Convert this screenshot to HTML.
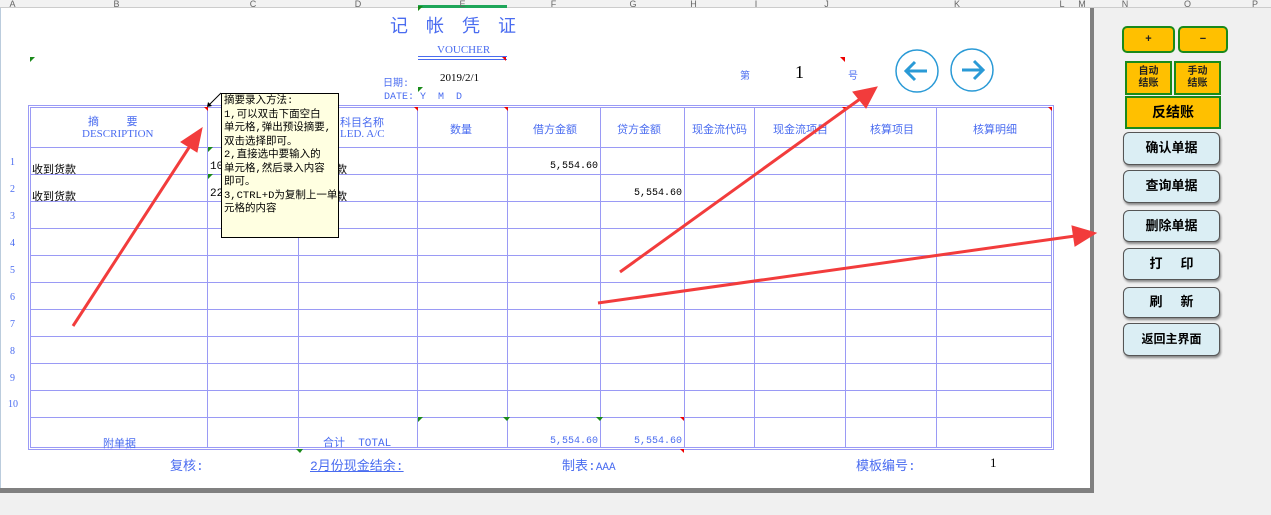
<!DOCTYPE html>
<html><head><meta charset="utf-8"><style>
*{margin:0;padding:0;box-sizing:border-box}
body{width:1271px;height:515px;background:#f0f0f0;position:relative;overflow:hidden;font-family:"Liberation Sans","Noto Sans CJK SC",sans-serif}
.a{position:absolute}
.hdr{position:absolute;top:0;height:8px;font-size:9px;color:#666;line-height:8px;text-align:center;overflow:hidden}
.t{position:absolute;font-family:"Liberation Mono","Noto Sans CJK SC",monospace;white-space:nowrap}
.n{position:absolute;font-family:"Liberation Mono",monospace;font-size:10px;white-space:nowrap;text-align:right}
.bl{color:#4a6cf0}
.btn{position:absolute;left:1123px;width:97px;background:#dbeef4;border:1.5px solid #555;border-radius:6px;box-shadow:1px 2px 2px #888;font-weight:bold;font-size:13px;text-align:center}
.yb{position:absolute;background:#ffc000;border:2px solid #1a8a1a;font-size:11px;text-align:center;font-weight:bold;color:#222}
</style></head><body>
<div class="a" style="left:0;top:0;width:1271px;height:8px;background:#f2f2f2;border-bottom:1px solid #ccc"></div>
<div class="a" style="left:418px;top:5px;width:89px;height:3px;background:#1fa65a"></div>
<div class="hdr" style="left:0;width:25px">A</div>
<div class="hdr" style="left:25px;width:183px">B</div>
<div class="hdr" style="left:208px;width:90px">C</div>
<div class="hdr" style="left:298px;width:120px">D</div>
<div class="hdr" style="left:418px;width:89px">E</div>
<div class="hdr" style="left:507px;width:93px">F</div>
<div class="hdr" style="left:600px;width:66px">G</div>
<div class="hdr" style="left:666px;width:55px">H</div>
<div class="hdr" style="left:721px;width:70px">I</div>
<div class="hdr" style="left:791px;width:71px">J</div>
<div class="hdr" style="left:862px;width:190px">K</div>
<div class="hdr" style="left:1052px;width:20px">L</div>
<div class="hdr" style="left:1072px;width:20px">M</div>
<div class="hdr" style="left:1100px;width:50px">N</div>
<div class="hdr" style="left:1160px;width:55px">O</div>
<div class="hdr" style="left:1230px;width:50px">P</div>
<div class="a" style="left:0;top:8px;width:1090px;height:481px;background:#fff;border-left:1px solid #bcd"></div>
<div class="a" style="left:1090px;top:8px;width:4px;height:485px;background:#808080"></div>
<div class="a" style="left:0;top:488px;width:1094px;height:5px;background:#808080"></div>

<div class="t bl" style="left:390px;top:12px;font-size:18px;letter-spacing:18px;font-family:'Liberation Sans','Noto Sans CJK SC',sans-serif">记帐凭证</div>
<div class="t bl" style="left:437px;top:44px;font-size:11px;font-family:'Liberation Serif',serif">VOUCHER</div>
<div class="a" style="left:418px;top:56px;width:89px;height:4px;border-top:1px solid #4a6cf0;border-bottom:1px solid #4a6cf0"></div>
<div class="t bl" style="left:383px;top:74px;font-size:10px">日期:</div>
<div class="t" style="left:440px;top:72px;font-size:11px;font-family:'Liberation Serif',serif">2019/2/1</div>
<div class="t bl" style="left:384px;top:92px;font-size:10px">DATE: Y &nbsp;M &nbsp;D</div>
<div class="t bl" style="left:740px;top:67px;font-size:10px">第</div>
<div class="t" style="left:795px;top:62px;font-size:18px;font-family:'Liberation Serif',serif">1</div>
<div class="t bl" style="left:848px;top:67px;font-size:10px">号</div>
<svg class="a" style="left:888px;top:46px" width="120" height="50">
<ellipse cx="29" cy="25" rx="21" ry="21" fill="#fff" stroke="#2a9ad6" stroke-width="1.5"/>
<ellipse cx="84" cy="24" rx="21" ry="21" fill="#fff" stroke="#2a9ad6" stroke-width="1.5"/>
<path d="M39 25H18M27 16l-9 9 9 9" fill="none" stroke="#2a9ad6" stroke-width="3"/>
<path d="M74 24h21M86 15l9 9-9 9" fill="none" stroke="#2a9ad6" stroke-width="3"/>
</svg>

<svg class="a" style="left:0;top:0" width="1090" height="490">
<g stroke="#9a9af5" stroke-width="1" fill="none">
<rect x="28.5" y="105.5" width="1025" height="344"/>
<rect x="30.5" y="107.5" width="1021" height="340"/>
<path d="M30.5 147.5H1051.5M30.5 174.5H1051.5M30.5 201.5H1051.5M30.5 228.5H1051.5M30.5 255.5H1051.5M30.5 282.5H1051.5M30.5 309.5H1051.5M30.5 336.5H1051.5M30.5 363.5H1051.5M30.5 390.5H1051.5M30.5 417.5H1051.5"/>
<path d="M207.5 107V447M298.5 107V447M417.5 107V447M507.5 107V447M600.5 107V447M684.5 107V447M754.5 107V447M845.5 107V447M936.5 107V447"/>
</g>
<g fill="#e00">
<path d="M204 107h4v4zM414 107h4v4zM504 107h4v4zM842 107h4v4zM1048 107h4v4zM502 57h4v4zM840 57h5v5zM680 417h4v4zM680 449h4v4z"/>
</g>
<g fill="#1a8a1a">
<path d="M30 57h5l-5 5zM418 6h5l-5 5zM418 87h5l-5 5zM208 147h5l-5 5zM208 174h5l-5 5zM418 417h5l-5 5zM503 417h7l-3 4zM596 417h7l-3 4zM296 449h7l-3 4z"/>
</g>
</svg>
<div class="t bl" style="left:88px;top:113px;font-size:11px;font-family:'Liberation Sans','Noto Sans CJK SC',sans-serif">摘 &nbsp; &nbsp; &nbsp; &nbsp; 要</div>
<div class="t bl" style="left:82px;top:128px;font-size:11px;font-family:'Liberation Serif',serif">DESCRIPTION</div>
<div class="t bl" style="left:340px;top:114px;font-size:11px">科目名称</div>
<div class="t bl" style="left:340px;top:128px;font-size:11px;font-family:'Liberation Serif',serif">LED. A/C</div>
<div class="t bl" style="left:450px;top:121px;font-size:11px">数量</div>
<div class="t bl" style="left:533px;top:121px;font-size:11px">借方金额</div>
<div class="t bl" style="left:617px;top:121px;font-size:11px">贷方金额</div>
<div class="t bl" style="left:692px;top:121px;font-size:11px">现金流代码</div>
<div class="t bl" style="left:773px;top:121px;font-size:11px">现金流项目</div>
<div class="t bl" style="left:870px;top:121px;font-size:11px">核算项目</div>
<div class="t bl" style="left:973px;top:121px;font-size:11px">核算明细</div>
<div class="t bl" style="left:10px;top:149px;font-size:10px;font-family:'Liberation Serif',serif;line-height:27px">1<br>2<br>3<br>4<br>5<br>6<br>7<br>8<br>9</div>
<div class="t bl" style="left:8px;top:399px;font-size:10px;font-family:'Liberation Serif',serif">10</div>
<div class="t" style="left:32px;top:161px;font-size:11px">收到货款</div>
<div class="t" style="left:32px;top:188px;font-size:11px">收到货款</div>
<div class="t" style="left:210px;top:161px;font-size:11px">10</div>
<div class="t" style="left:210px;top:188px;font-size:11px">22</div>
<div class="t" style="left:336px;top:161px;font-size:11px">款</div>
<div class="t" style="left:336px;top:188px;font-size:11px">款</div>
<div class="n" style="right:673px;top:161px">5,554.60</div>
<div class="n" style="right:589px;top:188px">5,554.60</div>
<div class="t bl" style="left:103px;top:435px;font-size:11px">附单据</div>
<div class="t bl" style="left:323px;top:434px;font-size:11px">合计 &nbsp;TOTAL</div>
<div class="n bl" style="right:673px;top:436px">5,554.60</div>
<div class="n bl" style="right:589px;top:436px">5,554.60</div>
<div class="t bl" style="left:170px;top:455px;font-size:13px">复核:</div>
<div class="t bl" style="left:310px;top:455px;font-size:13px;text-decoration:underline">2月份现金结余:</div>
<div class="t bl" style="left:562px;top:455px;font-size:13px">制表:<span style="font-size:11px">AAA</span></div>
<div class="t bl" style="left:856px;top:455px;font-size:13px">模板编号:</div>
<div class="t" style="left:990px;top:455px;font-size:13px;font-family:'Liberation Serif',serif">1</div>

<div class="a" style="left:221px;top:93px;width:118px;height:145px;background:#ffffe1;border:1px solid #000;font-size:10.5px;line-height:13.5px;padding:1px 2px;font-family:'Liberation Mono','Noto Sans CJK SC',monospace;white-space:nowrap;overflow:hidden">摘要录入方法:<br>1,可以双击下面空白<br>单元格,弹出预设摘要,<br>双击选择即可。<br>2,直接选中要输入的<br>单元格,然后录入内容<br>即可。<br>3,CTRL+D为复制上一单<br>元格的内容</div>
<svg class="a" style="left:205px;top:90px" width="20" height="20"><path d="M16 3L4 15" stroke="#000"/><path d="M2 17l1-5 4 4z" fill="#000"/></svg>

<div class="yb" style="left:1122px;top:26px;width:53px;height:27px;border-radius:5px;line-height:23px">+</div>
<div class="yb" style="left:1178px;top:26px;width:50px;height:27px;border-radius:5px;line-height:23px">−</div>
<div class="yb" style="left:1125px;top:61px;width:47px;height:34px;line-height:12px;padding-top:3px;font-size:10px">自动<br>结账</div>
<div class="yb" style="left:1174px;top:61px;width:47px;height:34px;line-height:12px;padding-top:3px;font-size:10px">手动<br>结账</div>
<div class="yb" style="left:1125px;top:96px;width:96px;height:33px;line-height:29px;font-size:14px;color:#000">反结账</div>
<div class="btn" style="top:132px;height:33px;line-height:30px">确认单据</div>
<div class="btn" style="top:170px;height:33px;line-height:30px">查询单据</div>
<div class="btn" style="top:210px;height:32px;line-height:29px">删除单据</div>
<div class="btn" style="top:248px;height:32px;line-height:29px">打 &nbsp; &nbsp; 印</div>
<div class="btn" style="top:287px;height:31px;line-height:28px">刷 &nbsp; &nbsp; 新</div>
<div class="btn" style="top:323px;height:33px;line-height:30px;font-size:12px">返回主界面</div>

<svg class="a" style="left:0;top:0" width="1271" height="515">
<g stroke="#f23c3c" stroke-width="3" fill="#f23c3c">
<line x1="73" y1="326" x2="190" y2="146"/>
<polygon points="202,128 181,142 197,152" stroke-width="1"/>
<line x1="620" y1="272" x2="860" y2="99"/>
<polygon points="877,87 853,92 866,108" stroke-width="1"/>
<line x1="598" y1="303" x2="1075" y2="236"/>
<polygon points="1096,233 1072,226 1075,246" stroke-width="1"/>
</g>
</svg>
</body></html>
